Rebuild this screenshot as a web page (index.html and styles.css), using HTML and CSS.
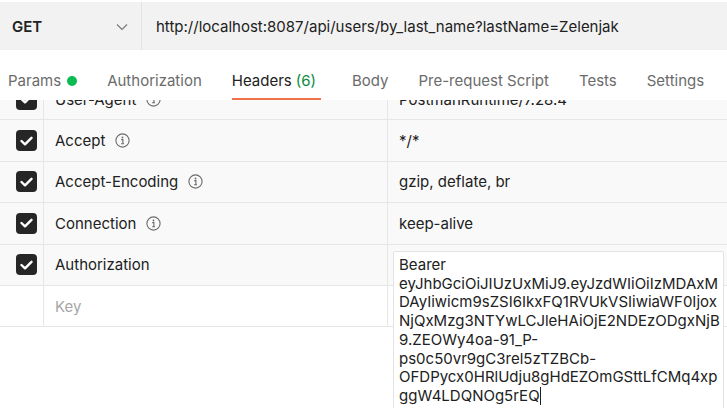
FILE: index.html
```html
<!DOCTYPE html>
<html>
<head>
<meta charset="utf-8">
<link rel="stylesheet" href="styles.css">
</head>
<body>
<div class="app">
  <div class="urlbar">
    <div class="method">
      <span class="method-name">GET</span>
      <svg class="chev" width="12" height="8" viewBox="0 0 12 8"><path d="M1 1.5 L6 6.5 L11 1.5" fill="none" stroke="#7a7a7a" stroke-width="1.2"/></svg>
    </div>
    <div class="url">http://localhost:8087/api/users/by_last_name?lastName=Zelenjak</div>
  </div>
  <div class="tabs">
    <div class="tab">Params <span class="dot"></span></div>
    <div class="tab">Authorization</div>
    <div class="tab active">Headers <span class="count">(6)</span></div>
    <div class="tab">Body</div>
    <div class="tab">Pre-request Script</div>
    <div class="tab">Tests</div>
    <div class="tab">Settings</div>
  </div>
  <div class="table-wrap">
    <div class="table">
      <div class="row">
        <div class="c-check"><span class="cb"><svg width="13" height="10" viewBox="0 0 13 10"><path d="M1.5 5 L5 8.3 L11.5 1.8" fill="none" stroke="#fff" stroke-width="2.4" stroke-linecap="round" stroke-linejoin="round"/></svg></span></div>
        <div class="c-key">User-Agent <svg class="info" width="15" height="15" viewBox="0 0 15 15"><circle cx="7.5" cy="7.5" r="6.6" fill="none" stroke="#6b6b6b" stroke-width="1.1"/><circle cx="7.5" cy="4.5" r="0.9" fill="#6b6b6b"/><path d="M6.2 6.6 H7.9 V10.6 M6.1 10.7 H9" fill="none" stroke="#6b6b6b" stroke-width="1.1"/></svg></div>
        <div class="c-val">PostmanRuntime/7.28.4</div>
      </div>
      <div class="row">
        <div class="c-check"><span class="cb"><svg width="13" height="10" viewBox="0 0 13 10"><path d="M1.5 5 L5 8.3 L11.5 1.8" fill="none" stroke="#fff" stroke-width="2.4" stroke-linecap="round" stroke-linejoin="round"/></svg></span></div>
        <div class="c-key">Accept <svg class="info" width="15" height="15" viewBox="0 0 15 15"><circle cx="7.5" cy="7.5" r="6.6" fill="none" stroke="#6b6b6b" stroke-width="1.1"/><circle cx="7.5" cy="4.5" r="0.9" fill="#6b6b6b"/><path d="M6.2 6.6 H7.9 V10.6 M6.1 10.7 H9" fill="none" stroke="#6b6b6b" stroke-width="1.1"/></svg></div>
        <div class="c-val">*/*</div>
      </div>
      <div class="row">
        <div class="c-check"><span class="cb"><svg width="13" height="10" viewBox="0 0 13 10"><path d="M1.5 5 L5 8.3 L11.5 1.8" fill="none" stroke="#fff" stroke-width="2.4" stroke-linecap="round" stroke-linejoin="round"/></svg></span></div>
        <div class="c-key">Accept-Encoding <svg class="info" width="15" height="15" viewBox="0 0 15 15"><circle cx="7.5" cy="7.5" r="6.6" fill="none" stroke="#6b6b6b" stroke-width="1.1"/><circle cx="7.5" cy="4.5" r="0.9" fill="#6b6b6b"/><path d="M6.2 6.6 H7.9 V10.6 M6.1 10.7 H9" fill="none" stroke="#6b6b6b" stroke-width="1.1"/></svg></div>
        <div class="c-val">gzip, deflate, br</div>
      </div>
      <div class="row">
        <div class="c-check"><span class="cb"><svg width="13" height="10" viewBox="0 0 13 10"><path d="M1.5 5 L5 8.3 L11.5 1.8" fill="none" stroke="#fff" stroke-width="2.4" stroke-linecap="round" stroke-linejoin="round"/></svg></span></div>
        <div class="c-key">Connection <svg class="info" width="15" height="15" viewBox="0 0 15 15"><circle cx="7.5" cy="7.5" r="6.6" fill="none" stroke="#6b6b6b" stroke-width="1.1"/><circle cx="7.5" cy="4.5" r="0.9" fill="#6b6b6b"/><path d="M6.2 6.6 H7.9 V10.6 M6.1 10.7 H9" fill="none" stroke="#6b6b6b" stroke-width="1.1"/></svg></div>
        <div class="c-val">keep-alive</div>
      </div>
      <div class="row">
        <div class="c-check"><span class="cb"><svg width="13" height="10" viewBox="0 0 13 10"><path d="M1.5 5 L5 8.3 L11.5 1.8" fill="none" stroke="#fff" stroke-width="2.4" stroke-linecap="round" stroke-linejoin="round"/></svg></span></div>
        <div class="c-key">Authorization</div>
        <div class="c-val"></div>
      </div>
      <div class="row empty">
        <div class="c-check"></div>
        <div class="c-key placeholder">Key</div>
        <div class="c-val"></div>
      </div>
    </div>
    <div class="editor">
      <div class="line">Bearer</div>
      <div class="line">eyJhbGciOiJIUzUxMiJ9.eyJzdWIiOiIzMDAxM</div>
      <div class="line">DAyIiwicm9sZSI6IkxFQ1RVUkVSIiwiaWF0Ijox</div>
      <div class="line">NjQxMzg3NTYwLCJleHAiOjE2NDEzODgxNjB</div>
      <div class="line">9.ZEOWy4oa-91_P-</div>
      <div class="line">ps0c50vr9gC3rel5zTZBCb-</div>
      <div class="line">OFDPycx0HRlUdju8gHdEZOmGSttLfCMq4xp</div>
      <div class="line">ggW4LDQNOg5rEQ<span class="caret"></span></div>
    </div>
  </div>
</div>
</body>
</html>
```
FILE: styles.css
```css
* { box-sizing: border-box; }
html, body { margin: 0; padding: 0; background: #fff; }
body {
  font-family: Inter, "Noto Sans", sans-serif;
  font-size: 15px;
  color: #212121;
  width: 727px;
  height: 408px;
  overflow: hidden;
}
.app { display: flex; flex-direction: column; height: 408px; }
.urlbar {
  margin-top: 2px;
  height: 48px;
  background: #f2f2f2;
  display: flex;
  align-items: stretch;
  flex-shrink: 0;
}
.method {
  width: 142px;
  border-right: 1px solid #e3e3e3;
  display: flex;
  align-items: center;
  justify-content: space-between;
  padding: 0 13px 0 12px;
}
.method-name { font-weight: 600; }
.chev { margin-top: 1px; }
.url {
  display: flex;
  align-items: center;
  padding-left: 14px;
  white-space: nowrap;
}
.tabs {
  height: 50px;
  flex-shrink: 0;
  display: flex;
  align-items: stretch;
  padding-left: 8px;
  position: relative;
  z-index: 2;
  background: #fff;
}
.tab {
  display: flex;
  align-items: center;
  margin-right: 30px;
  color: #6b6b6b;
  white-space: nowrap;
  padding-top: 13px;
  border-bottom: 2px solid transparent;
}
.tab.active { color: #212121; border-bottom-color: #f0714a; padding-right: 5px; margin-right: 31px; }
.count { color: #0a8a3e; margin-left: 4px; }
.dot {
  display: inline-block;
  width: 10px; height: 10px;
  border-radius: 50%;
  background: #0cbb52;
  margin-left: 6px;
}
.table-wrap {
  flex: 1;
  position: relative;
  overflow: hidden;
}
.table { margin-top: -21px; }
.row {
  display: flex;
  height: 41.4px;
  background: #f9f9f9;
  border-bottom: 1px solid #e6e6e6;
}
.row.empty { background: #fff; }
.c-check {
  width: 44px;
  flex-shrink: 0;
  border-right: 1px solid #e6e6e6;
  display: flex;
  align-items: center;
  padding-left: 16px;
}
.cb {
  width: 21px; height: 21px;
  border-radius: 4px;
  background: #262626;
  display: flex;
  align-items: center;
  justify-content: center;
}
.c-key {
  width: 344px;
  flex-shrink: 0;
  border-right: 1px solid #e6e6e6;
  display: flex;
  align-items: center;
  gap: 10px;
  padding-left: 11px;
  white-space: nowrap;
}
.placeholder { color: #a6a6a6; }
.c-val {
  flex: 1;
  display: flex;
  align-items: center;
  padding-left: 11px;
  white-space: nowrap;
}
.editor {
  position: absolute;
  left: 393px;
  top: 151px;
  width: 331px;
  height: 200px;
  background: #fff;
  border: 1px solid #e3e3e3;
  border-radius: 2px;
  padding: 4px 0 0 5px;
  line-height: 18.7px;
  z-index: 3;
}
.line { white-space: nowrap; }
.caret {
  display: inline-block;
  width: 1px;
  height: 18px;
  background: #212121;
  vertical-align: -4px;
}
```
